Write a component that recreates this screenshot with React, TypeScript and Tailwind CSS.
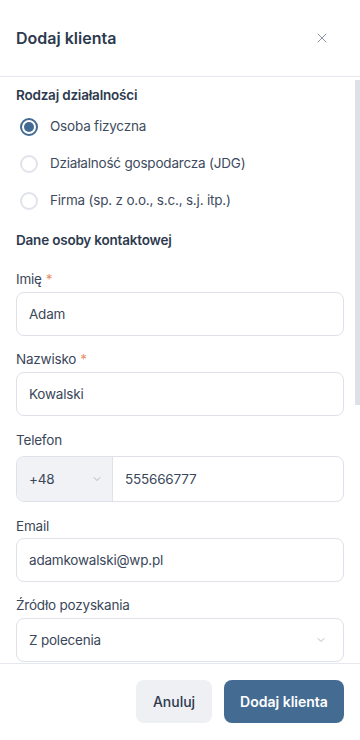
import { ReactNode } from 'react';
import { ChevronDown, X } from 'lucide-react';

const font = { fontFamily: 'Inter, "Noto Sans", sans-serif' };

const Radio = ({ checked, label }: { checked?: boolean; label: string }) => (
  <label className="flex h-[37px] items-center gap-3 pl-1">
    <span
      className={
        checked
          ? 'flex h-[18px] w-[18px] items-center justify-center rounded-full border-2 border-[#426b93]'
          : 'flex h-[18px] w-[18px] items-center justify-center rounded-full border-2 border-[#e0e3ea]'
      }
    >
      {checked && <span className="h-[10px] w-[10px] rounded-full bg-[#426b93]" />}
    </span>
    <span className="text-[13.5px] tracking-[-0.2px] text-[#3e4b5e]">{label}</span>
  </label>
);

const Field = ({
  label,
  required,
  className,
  gap,
  children,
}: {
  label: string;
  required?: boolean;
  className: string;
  gap: string;
  children: ReactNode;
}) => (
  <div className={`flex flex-col ${gap} ${className}`}>
    <span className="h-5 text-[13.5px] leading-5 tracking-[-0.2px] text-[#3a475a]">
      {label}
      {required && <span className="ml-1 text-[#e8906a]">*</span>}
    </span>
    {children}
  </div>
);

const TextInput = ({ value }: { value: string }) => (
  <div className="flex h-11 items-center rounded-lg border border-[#dfe1ea] bg-white px-3 text-[13.5px] tracking-[-0.2px] text-[#3a475a]">
    {value}
  </div>
);

const App = () => (
  <div className="flex h-[740px] w-[360px] flex-col overflow-hidden bg-white" style={font}>
    <header className="flex h-[77px] shrink-0 items-center justify-between border-b border-[#e6e8ef] pl-4 pr-[22px]">
      <h1 className="text-base font-semibold text-[#2d3a4e]">Dodaj klienta</h1>
      <button className="flex h-8 w-8 items-center justify-center text-[#8b95a7]" aria-label="Zamknij">
        <X size={16} strokeWidth={1.5} />
      </button>
    </header>

    <div className="relative min-h-0 flex-1 overflow-hidden">
      <div className="px-4 pt-2 pb-96">
        <h2 className="h-5 text-[13.5px] font-semibold leading-5 tracking-[-0.2px] text-[#2d3a4e]">Rodzaj działalności</h2>
        <div className="mt-[3px] flex flex-col">
          <Radio checked label="Osoba fizyczna" />
          <Radio label="Działalność gospodarcza (JDG)" />
          <Radio label="Firma (sp. z o.o., s.c., s.j. itp.)" />
        </div>

        <h2 className="mt-[11px] h-5 text-[13.5px] font-semibold leading-5 tracking-[-0.2px] text-[#2d3a4e]">
          Dane osoby kontaktowej
        </h2>

        <Field label="Imię" required className="mt-[19px]" gap="gap-[3px]">
          <TextInput value="Adam" />
        </Field>
        <Field label="Nazwisko" required className="mt-[13px]" gap="gap-[3px]">
          <TextInput value="Kowalski" />
        </Field>
        <Field label="Telefon" className="mt-[14px]" gap="gap-[6px]">
          <div className="flex h-[46px] overflow-hidden rounded-lg border border-[#dfe1ea] text-[13.5px] tracking-[-0.2px] text-[#3a475a]">
            <div className="flex w-[96px] items-center justify-between border-r border-[#dfe1ea] bg-[#f1f2f6] pl-3 pr-[9px]">
              <span>+48</span>
              <ChevronDown size={12} strokeWidth={1.5} className="text-[#9aa3b4]" />
            </div>
            <div className="flex flex-1 items-center px-3">555666777</div>
          </div>
        </Field>
        <Field label="Email" className="mt-[14px]" gap="gap-[2px]">
          <TextInput value="adamkowalski@wp.pl" />
        </Field>
        <Field label="Źródło pozyskania" className="mt-[13px]" gap="gap-[3px]">
          <div className="flex h-11 items-center justify-between rounded-lg border border-[#dfe1ea] bg-white pl-3 pr-4 text-[13.5px] tracking-[-0.2px] text-[#3a475a]">
            <span>Z polecenia</span>
            <ChevronDown size={12} strokeWidth={1.5} className="text-[#9aa3b4]" />
          </div>
        </Field>
      </div>
      <div className="absolute right-0 top-[3px] h-[325px] w-[5px] bg-[#dfe1e8]" />
    </div>

    <footer className="flex h-[77px] shrink-0 items-start justify-end gap-3 border-t border-[#e6e8ef] px-4 pt-4">
      <button className="h-[43px] w-[76px] rounded-lg bg-[#eff0f4] text-sm font-medium text-[#2d3a4e]">Anuluj</button>
      <button className="h-[43px] w-[120px] rounded-lg bg-[#446c93] text-sm font-semibold text-white">Dodaj klienta</button>
    </footer>
  </div>
);

export default App;
